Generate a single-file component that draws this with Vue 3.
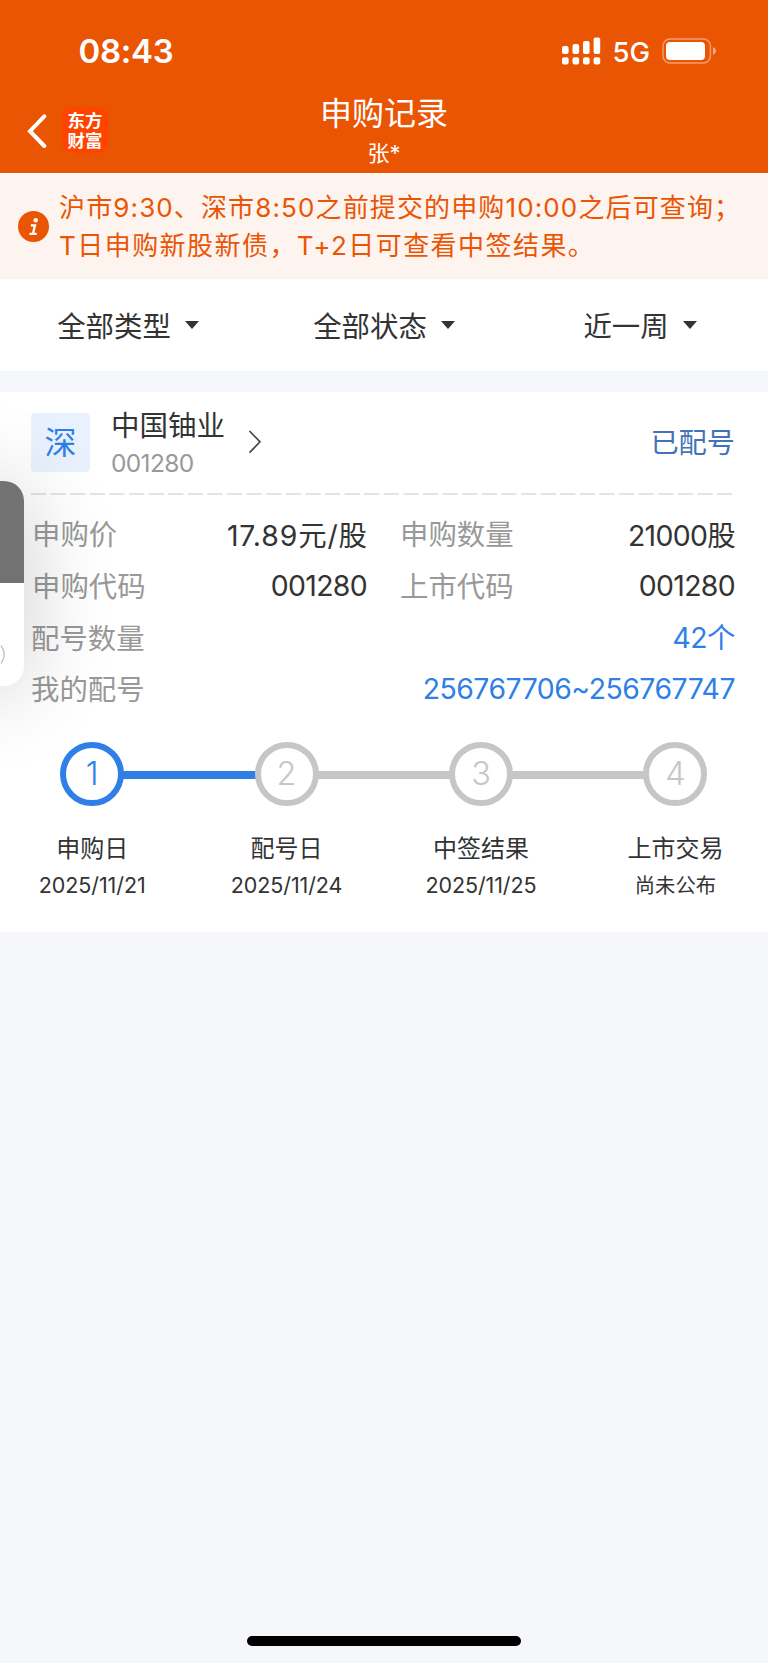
<script setup>
const filters = [
  { label: '全部类型', cls: 'f1' },
  { label: '全部状态', cls: 'f2' },
  { label: '近一周', cls: 'f3' },
]
const steps = [
  { n: 1, title: '申购日', date: '2025/11/21', active: true },
  { n: 2, title: '配号日', date: '2025/11/24' },
  { n: 3, title: '中签结果', date: '2025/11/25' },
  { n: 4, title: '上市交易', date: '尚未公布', cjk: true },
]
</script>

<template>
  <div class="page">
    <header class="header">
      <div class="status">
        <span class="time">08:43</span>
        <svg class="signal" width="39" height="28" viewBox="0 0 39 28" fill="#fff">
          <rect x="0" y="9" width="6.6" height="8" rx="2" />
          <rect x="10.5" y="7" width="6.6" height="10" rx="2" />
          <rect x="21" y="4" width="6.6" height="13" rx="2" />
          <rect x="31.6" y="0.5" width="6.6" height="16.5" rx="2" />
          <rect x="0" y="20.2" width="6.6" height="7.2" rx="2" />
          <rect x="10.5" y="20.2" width="6.6" height="7.2" rx="2" />
          <rect x="21" y="20.2" width="6.6" height="7.2" rx="2" />
          <rect x="31.6" y="20.2" width="6.6" height="7.2" rx="2" />
        </svg>
        <span class="net">5G</span>
        <svg class="battery" width="55" height="26" viewBox="0 0 55 26">
          <rect x="1" y="1" width="47.4" height="24" rx="7" fill="none" stroke="#fff" stroke-opacity=".42" stroke-width="1.5" />
          <rect x="4" y="4" width="39" height="18" rx="4" fill="#fff" />
          <path d="M51 9 Q54 10.5 54 13 Q54 15.500 51 17 Z" fill="#fff" fill-opacity=".5" />
        </svg>
      </div>
      <div class="nav">
        <div class="left">
          <svg width="20" height="36" viewBox="0 0 20 36" fill="none" stroke="#fff" stroke-width="4" stroke-linecap="round" stroke-linejoin="miter">
            <path d="M17.300 3.300 L3 18.200 L17.300 33" />
          </svg>
          <div class="logo"><span>东方</span><span>财富</span></div>
        </div>
        <div class="heading">
          <div class="title">申购记录</div>
          <div class="user">张*</div>
        </div>
      </div>
    </header>

    <section class="notice">
      <svg width="31" height="31" viewBox="0 0 31 31">
        <circle cx="15.500" cy="15.500" r="15.500" fill="#ea5504" />
        <circle cx="17.700" cy="9.300" r="2.300" fill="#fff" />
        <path d="M12.800 14.300 H17 L14.900 22.700 M11.500 22.900 H18.700" fill="none" stroke="#fff" stroke-width="2.300" />
      </svg>
      <p><span class="l1">沪市9:30、深市8:50之前提交的申购10:00之后可查询；</span><br /><span class="l2">T日申购新股新债，T+2日可查看中签结果。</span></p>
    </section>

    <nav class="filters">
      <div v-for="f in filters" :key="f.label" :class="['filter', f.cls]">
        <span>{{ f.label }}</span><i class="caret"></i>
      </div>
    </nav>

    <section class="card">
      <div class="stock">
        <div class="market">深</div>
        <div class="names">
          <div class="name">中国铀业</div>
          <div class="code">001280</div>
        </div>
        <svg class="chev" width="14" height="26" viewBox="0 0 14 26" fill="none" stroke="#4a4a4a" stroke-width="1.700">
          <path d="M1.500 2 L12 12.800 L1.500 23.600" />
        </svg>
        <div class="state">已配号</div>
      </div>
      <svg class="dash" width="702" height="2" viewBox="0 0 702 2">
        <path d="M0 1 H702" stroke="#dcdcdc" stroke-width="1.300" stroke-dasharray="15.200 4.400" />
      </svg>
      <div class="rows">
        <div class="row">
          <div class="cell"><span class="k ind">申购价</span><span class="v price">17.89元/股</span></div>
          <div class="cell"><span class="k">申购数量</span><span class="v">21000股</span></div>
        </div>
        <div class="row">
          <div class="cell"><span class="k ind">申购代码</span><span class="v">001280</span></div>
          <div class="cell"><span class="k">上市代码</span><span class="v">001280</span></div>
        </div>
        <div class="row">
          <div class="cell"><span class="k">配号数量</span><span class="v blue">42个</span></div>
        </div>
        <div class="row">
          <div class="cell"><span class="k">我的配号</span><span class="v blue">256767706~256767747</span></div>
        </div>
      </div>
      <div class="steps">
        <div v-for="s in steps" :key="s.n" :class="['step', { active: s.active }]">
          <div class="track">
            <i class="bar"></i>
            <b class="ring">{{ s.n }}</b>
            <i class="bar"></i>
          </div>
          <div class="st">{{ s.title }}</div>
          <div :class="['sd', { cjk: s.cjk }]">{{ s.date }}</div>
        </div>
      </div>
      <div class="veil">
        <aside class="floater">
          <div class="dark"></div>
          <div class="light">
            <svg width="6" height="22" viewBox="0 0 6 22" fill="none" stroke="#c4c4c4" stroke-width="1.300"><path d="M1 1.500 Q7.500 10.500 1 19.500" /></svg>
          </div>
        </aside>
      </div>
    </section>
    <div class="home"></div>
  </div>
</template>

<style>
body { margin: 0; background: #f6f7fa; }
</style>

<style scoped>
.page {
  width: 768px;
  height: 1663px;
  display: flex;
  flex-direction: column;
  background: #f6f7fa;
  color: #333;
  font-family: Inter, "Noto Sans CJK SC", sans-serif;
  font-weight: 370;
  overflow: hidden;
  white-space: nowrap;
}
.header { height: 173px; background: #ea5504; color: #fff; flex: none; border-bottom: 1px solid #fff; }
.status { height: 102px; display: flex; align-items: center; }
.time { margin-left: 78.500px; width: 483px; font-size: 33px; font-weight: 600; letter-spacing: -0.300px; line-height: 42px; }
.signal { flex: none; }
.net { margin-left: 12px; width: 37.500px; font-size: 27.500px; font-weight: 450; line-height: 36px; padding-top: 2px; }
.battery { margin-left: 12px; }
.nav { height: 71px; display: grid; grid-template-columns: 1fr auto 1fr; }
.left { display: flex; align-items: flex-start; padding-left: 27px; }
.left > svg { margin-top: 11px; }
.logo {
  margin: 5px 0 0 15px; width: 46px; height: 46px; border-radius: 9px; background: #ff4400;
  display: flex; flex-direction: column; align-items: center; padding-top: 4px; box-sizing: border-box;
  font-size: 17.500px; font-weight: 700; line-height: 19.500px;
}
.heading { text-align: center; margin-top: -8px; }
.title { font-size: 32px; line-height: 40px; }
.user { font-size: 22px; line-height: 38px; }

.notice { height: 105px; background: #fdf3ef; color: #ea5504; display: flex; align-items: center; flex: none; }
.notice svg { margin-left: 18px; flex: none; }
.notice p { margin: 0 0 0 10px; font-size: 26px; line-height: 38px; letter-spacing: 1.450px; }
.notice .l1 { letter-spacing: 1.130px; }

.filters { height: 92px; background: #fff; display: grid; grid-template-columns: repeat(3, 256px); flex: none; }
.filter { display: flex; align-items: center; justify-content: center; font-size: 28.400px; }
.filter span { margin-top: -2px; }
.caret { margin-left: 14px; border: 7px solid transparent; border-top: 8px solid #333; border-bottom: 0; }

.card { position: relative; margin-top: 20.500px; height: 540.500px; background: #fff; flex: none; display: flex; flex-direction: column; }
.stock { height: 101.500px; display: flex; align-items: center; padding: 0 33px 0 31px; }
.market { width: 59px; height: 59px; border-radius: 4px; background: #e8f1fd; color: #2f7fe6; font-size: 32px; line-height: 59px; text-align: center; font-weight: 400; }
.names { margin-left: 21px; width: 137px; padding-top: 5px; }
.name { font-size: 28.500px; line-height: 36px; }
.code { font-size: 24.500px; line-height: 38px; color: #999; letter-spacing: -0.650px; }
.state { margin: -3px 0 0 auto; font-size: 28.200px; color: #4372b8; }
.dash { margin-left: 31px; display: block; }
.rows { margin-top: 15px; height: 208px; }
.row { height: 51.700px; display: flex; padding: 0 33px 0 31px; }
.row:first-child .cell:first-child, .row:nth-child(2) .cell:first-child { flex: none; width: 336px; margin-right: 33px; }
.cell { flex: 1; display: flex; align-items: center; justify-content: space-between; font-size: 28.400px; }
.k { color: #999; margin-top: -6px; }
.k.ind { margin-left: 1px; }
.v { letter-spacing: -0.650px; margin-top: -5px; }
.price { letter-spacing: 0.900px; margin-right: -0.900px; }
.blue { color: #2f7fe6; letter-spacing: -0.500px; }
.row:nth-child(3) .v { margin-top: -8px; }
.row:nth-child(4) .v { margin-top: -4px; }

.steps { margin: 24px 0 0 -5px; width: 777.600px; display: grid; grid-template-columns: repeat(4, 1fr); text-align: center; }
.track { display: flex; align-items: center; }
.bar { flex: 1; height: 8px; background: #c6c6c6; margin-top: 2px; }
.ring { width: 64px; height: 64px; box-sizing: border-box; border: 6.500px solid #c6c6c6; border-radius: 50%; color: #c6c6c6; font-size: 32.500px; line-height: 52px; font-weight: 300; margin: 0 -1px; }
.active .ring { color: #2f7fe6; border-color: #2f7fe6; }
.active .bar { background: #2f7fe6; }
.step:nth-child(2) .bar:first-child { background: #2f7fe6; }
.step:first-child .bar:first-child, .step:last-child .bar:last-child { visibility: hidden; }
.st { margin-top: 25px; font-size: 24px; line-height: 36px; }
.sd { font-size: 21.500px; line-height: 37px; letter-spacing: -0.100px; }
.sd.cjk { font-size: 20.300px; letter-spacing: 0; line-height: 38px; }

.veil { position: absolute; inset: 0; overflow: hidden; pointer-events: none; }
.floater { position: absolute; left: -60px; top: 89.500px; width: 84px; height: 205px; border-radius: 20px; background: #fff; box-shadow: 0 4px 90px rgba(0,0,0,.2); }
.dark { height: 102px; background: #727272; border-radius: 20px 20px 0 0; }
.light { padding: 61px 0 0 60px; }

.home { margin: auto auto 17px 247px; width: 274px; height: 10px; border-radius: 5px; background: #000; flex: none; }
</style>
